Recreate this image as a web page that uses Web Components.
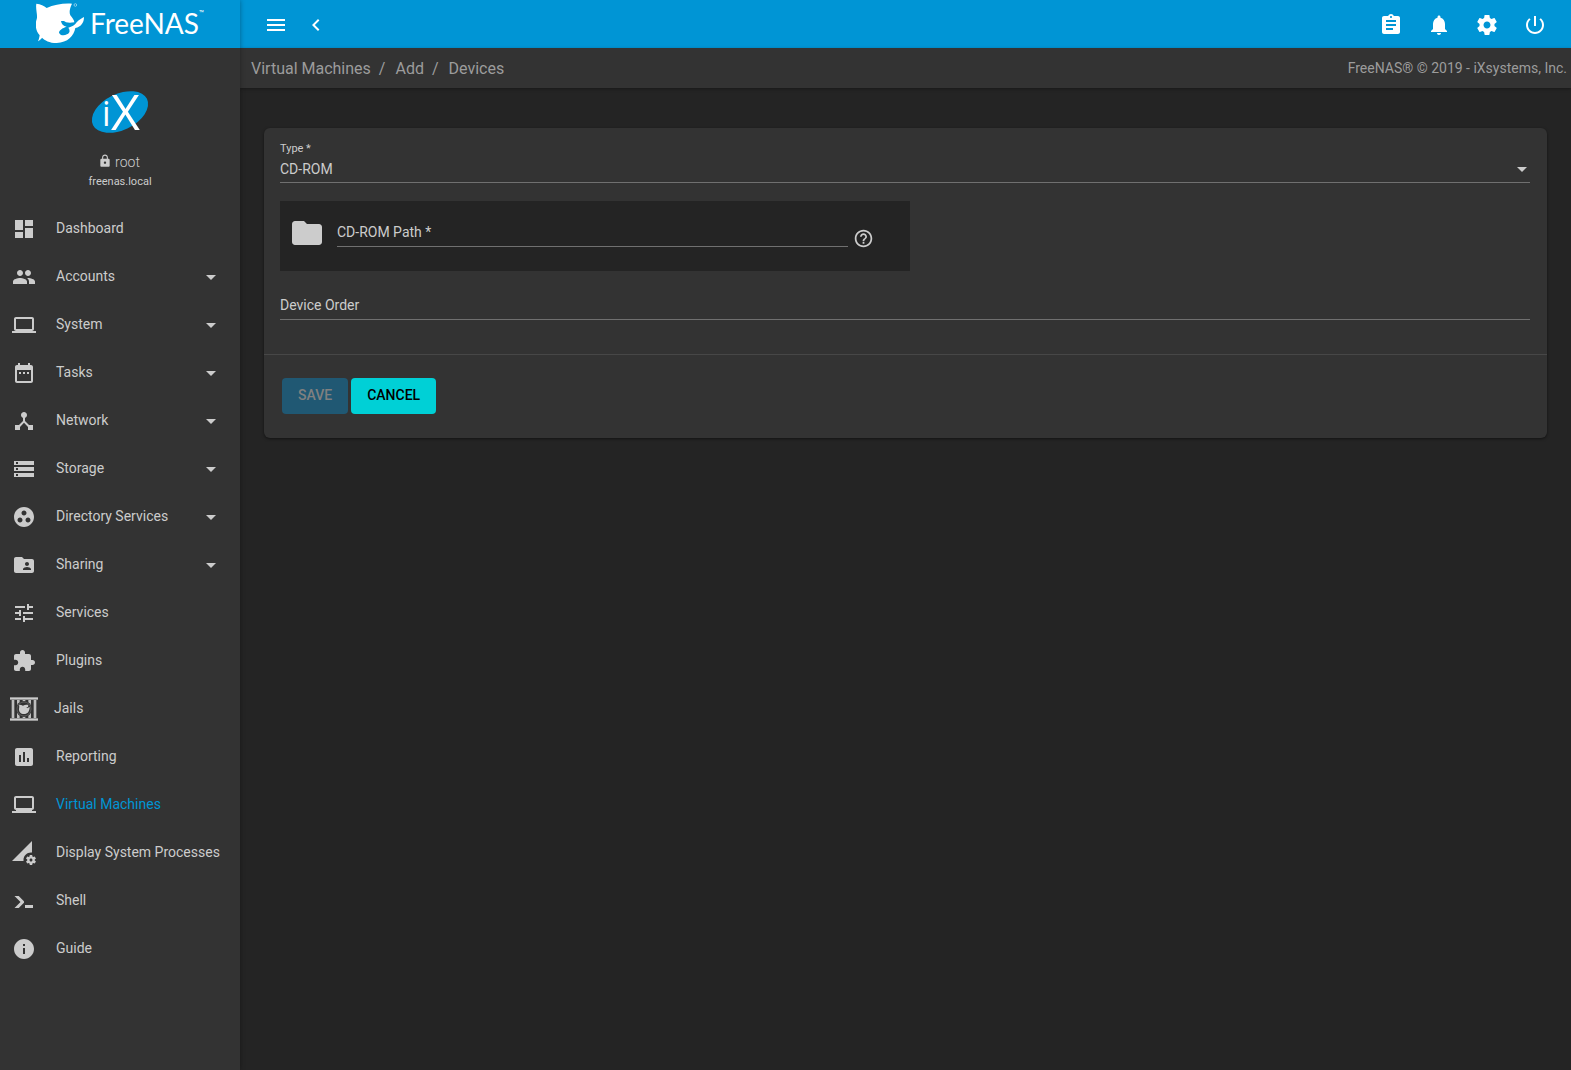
<!DOCTYPE html>
<html lang="en">
<head>
<meta charset="utf-8">
<meta name="viewport" content="width=device-width, initial-scale=1">
<title>FreeNAS - Virtual Machines</title>
<style>
  :root {
    --primary: #0095d5;
    --accent: #00d0d6;
    --bg1: #242424;
    --bg2: #333333;
    --fg1: #cccccc;
    --fg2: #9c9c9c;
    --line: #707070;
  }

  body {
    margin: 0;
    background: var(--bg1);
    color: var(--fg1);
    font-family: Roboto, "Liberation Sans", sans-serif;
    font-size: 14px;
  }
</style>
</head>
<body>
<nas-layout>
  <nas-brand slot="brand"></nas-brand>
  <nas-profile slot="sidebar" user="root" host="freenas.local"></nas-profile>
  <nas-nav slot="sidebar">
    <nas-nav-item icon="dashboard">Dashboard</nas-nav-item>
    <nas-nav-item icon="people" expandable>Accounts</nas-nav-item>
    <nas-nav-item icon="computer" expandable>System</nas-nav-item>
    <nas-nav-item icon="date_range" expandable>Tasks</nas-nav-item>
    <nas-nav-item icon="device_hub" expandable>Network</nas-nav-item>
    <nas-nav-item icon="storage" expandable>Storage</nas-nav-item>
    <nas-nav-item icon="group_work" expandable>Directory Services</nas-nav-item>
    <nas-nav-item icon="folder_shared" expandable>Sharing</nas-nav-item>
    <nas-nav-item icon="tune">Services</nas-nav-item>
    <nas-nav-item icon="extension">Plugins</nas-nav-item>
    <nas-nav-item icon="jail" wide>Jails</nas-nav-item>
    <nas-nav-item icon="assessment">Reporting</nas-nav-item>
    <nas-nav-item icon="laptop" active>Virtual Machines</nas-nav-item>
    <nas-nav-item icon="perm_data_setting">Display System Processes</nas-nav-item>
    <nas-nav-item icon="console">Shell</nas-nav-item>
    <nas-nav-item icon="info">Guide</nas-nav-item>
  </nas-nav>

  <nas-topbar slot="topbar">
    <nas-icon-button slot="start" icon="menu" label="Toggle menu"></nas-icon-button>
    <nas-icon-button slot="start" icon="chevron_left" label="Collapse menu"></nas-icon-button>
    <nas-icon-button slot="end" icon="assignment" label="Task manager"></nas-icon-button>
    <nas-icon-button slot="end" icon="notifications" label="Alerts"></nas-icon-button>
    <nas-icon-button slot="end" icon="settings" label="Settings"></nas-icon-button>
    <nas-icon-button slot="end" icon="power" label="Power"></nas-icon-button>
  </nas-topbar>

  <nas-breadcrumb slot="topbar" path="Virtual Machines,Add,Devices">FreeNAS® © 2019 - iXsystems, Inc.</nas-breadcrumb>

  <nas-card>
    <nas-select label="Type *" options="CD-ROM,NIC,Disk,Raw File,VNC"></nas-select>
    <nas-explorer label="CD-ROM Path *"></nas-explorer>
    <nas-input label="Device Order"></nas-input>
    <nas-button slot="actions" color="primary" disabled>SAVE</nas-button>
    <nas-button slot="actions" color="accent">CANCEL</nas-button>
  </nas-card>
</nas-layout>

<script>
const ICONS = {
  dashboard: "M3 13h8V3H3v10zm0 8h8v-6H3v6zm10 0h8V11h-8v10zm0-18v6h8V3h-8z",
  people: "M16 11c1.66 0 2.99-1.34 2.99-3S17.66 5 16 5c-1.66 0-3 1.34-3 3s1.34 3 3 3zm-8 0c1.66 0 2.99-1.34 2.99-3S9.66 5 8 5C6.34 5 5 6.34 5 8s1.34 3 3 3zm0 2c-2.33 0-7 1.17-7 3.5V19h14v-2.5c0-2.33-4.67-3.5-7-3.5zm8 0c-.29 0-.62.02-.97.05 1.16.84 1.97 1.97 1.97 3.45V19h6v-2.5c0-2.33-4.67-3.5-7-3.5z",
  computer: "M20 18c1.1 0 1.99-.9 1.99-2L22 6c0-1.1-.9-2-2-2H4c-1.1 0-2 .9-2 2v10c0 1.1.9 2 2 2H0v2h24v-2h-4zM4 6h16v10H4V6z",
  laptop: "M20 18v-1c1.1 0 1.99-.9 1.99-2L22 5c0-1.1-.9-2-2-2H4c-1.1 0-2 .9-2 2v10c0 1.1.9 2 2 2v1H0v2h24v-2h-4zM4 5h16v10H4V5z",
  date_range: "M9 11H7v2h2v-2zm4 0h-2v2h2v-2zm4 0h-2v2h2v-2zm2-7h-1V2h-2v2H8V2H6v2H5c-1.11 0-1.99.9-1.99 2L3 20c0 1.1.89 2 2 2h14c1.1 0 2-.9 2-2V6c0-1.1-.9-2-2-2zm0 16H5V9h14v11z",
  device_hub: "M17 16l-4-4V8.82C14.16 8.4 15 7.3 15 6c0-1.66-1.34-3-3-3S9 4.34 9 6c0 1.3.84 2.4 2 2.82V12l-4 4H3v5h5v-3.05l4-4.2 4 4.2V21h5v-5h-4z",
  storage: "M2 20h20v-4H2v4zm2-3h2v2H4v-2zM2 4v4h20V4H2zm4 3H4V5h2v2zm-4 7h20v-4H2v4zm2-3h2v2H4v-2z",
  group_work: "M12 2C6.48 2 2 6.48 2 12s4.48 10 10 10 10-4.48 10-10S17.52 2 12 2zM8 17.5c-1.38 0-2.5-1.12-2.5-2.5s1.12-2.5 2.5-2.5 2.5 1.12 2.5 2.5-1.12 2.5-2.5 2.5zM9.5 8c0-1.38 1.12-2.5 2.5-2.5s2.5 1.12 2.5 2.5-1.12 2.5-2.5 2.5S9.5 9.38 9.5 8zm6.5 9.5c-1.38 0-2.5-1.12-2.5-2.5s1.12-2.5 2.5-2.5 2.5 1.12 2.5 2.5-1.12 2.5-2.5 2.5z",
  folder_shared: "M20 6h-8l-2-2H4c-1.1 0-1.99.9-1.99 2L2 18c0 1.1.9 2 2 2h16c1.1 0 2-.9 2-2V8c0-1.1-.9-2-2-2zm-5 3c1.1 0 2 .9 2 2s-.9 2-2 2-2-.9-2-2 .9-2 2-2zm4 8h-8v-1c0-1.33 2.67-2 4-2s4 .67 4 2v1z",
  tune: "M3 17v2h6v-2H3zM3 5v2h10V5H3zm10 16v-2h8v-2h-8v-2h-2v6h2zM7 9v2H3v2h4v2h2V9H7zm14 4v-2H11v2h10zm-6-4h2V7h4V5h-4V3h-2v6z",
  extension: "M20.5 11H19V7c0-1.1-.9-2-2-2h-4V3.5C13 2.12 11.88 1 10.5 1S8 2.12 8 3.5V5H4c-1.1 0-1.99.9-1.99 2v3.8H3.5c1.49 0 2.7 1.21 2.7 2.7s-1.21 2.7-2.7 2.7H2V20c0 1.1.9 2 2 2h3.8v-1.5c0-1.49 1.21-2.7 2.7-2.7 1.49 0 2.7 1.21 2.7 2.7V22H17c1.1 0 2-.9 2-2v-4h1.5c1.38 0 2.5-1.12 2.5-2.5S21.88 11 20.5 11z",
  assessment: "M19 3H5c-1.1 0-2 .9-2 2v14c0 1.1.9 2 2 2h14c1.1 0 2-.9 2-2V5c0-1.1-.9-2-2-2zM9 17H7v-7h2v7zm4 0h-2V7h2v10zm4 0h-2v-4h2v4z",
  perm_data_setting: "M18.99 11.5c.34 0 .67.03 1 .07L20 0 0 20h11.56c-.04-.33-.07-.66-.07-1 0-4.14 3.36-7.5 7.5-7.5zm3.71 7.99c.02-.16.04-.32.04-.49 0-.17-.01-.33-.04-.49l1.06-.83c.09-.08.12-.21.06-.32l-1-1.73c-.06-.11-.19-.15-.31-.11l-1.24.5c-.26-.2-.54-.37-.85-.49l-.19-1.32c-.01-.12-.12-.21-.24-.21h-2c-.12 0-.23.09-.25.21l-.19 1.32c-.3.13-.59.29-.85.49l-1.24-.5c-.11-.04-.24 0-.31.11l-1 1.73c-.06.11-.04.24.06.32l1.06.83c-.02.16-.03.32-.03.49 0 .17.01.33.03.49l-1.06.83c-.09.08-.12.21-.06.32l1 1.73c.06.11.19.15.31.11l1.24-.5c.26.2.54.37.85.49l.19 1.32c.02.12.12.21.25.21h2c.12 0 .23-.09.25-.21l.19-1.32c.3-.13.59-.29.84-.49l1.25.5c.11.04.24 0 .31-.11l1-1.73c.06-.11.03-.24-.06-.32l-1.07-.83zm-3.71 1.01c-.83 0-1.5-.67-1.5-1.5s.67-1.5 1.5-1.5 1.5.67 1.5 1.5-.67 1.5-1.5 1.5z",
  console: "M13 19v-3h8v3h-8zM8.5 13L2.47 7h4.24l4.96 4.95c.58.59.58 1.55.03 2.12L6.74 19H2.5l6-6z",
  info: "M12 2C6.48 2 2 6.48 2 12s4.48 10 10 10 10-4.48 10-10S17.52 2 12 2zm1 15h-2v-6h2v6zm0-8h-2V7h2v2z",
  menu: "M3 18h18v-2H3v2zm0-5h18v-2H3v2zm0-7v2h18V6H3z",
  chevron_left: "M15.41 7.41L14 6l-6 6 6 6 1.41-1.41L10.83 12z",
  assignment: "M19 3h-4.18C14.4 1.84 13.3 1 12 1c-1.3 0-2.4.84-2.82 2H5c-1.1 0-2 .9-2 2v14c0 1.1.9 2 2 2h14c1.1 0 2-.9 2-2V5c0-1.1-.9-2-2-2zm-7 0c.55 0 1 .45 1 1s-.45 1-1 1-1-.45-1-1 .45-1 1-1zm2 14H7v-2h7v2zm3-4H7v-2h10v2zm0-4H7V7h10v2z",
  notifications: "M12 22c1.1 0 2-.9 2-2h-4c0 1.1.89 2 2 2zm6-6v-5c0-3.07-1.64-5.64-4.5-6.32V4c0-.83-.67-1.5-1.5-1.5s-1.5.67-1.5 1.5v.68C7.63 5.36 6 7.92 6 11v5l-2 2v1h16v-1l-2-2z",
  settings: "M19.43 12.98c.04-.32.07-.64.07-.98s-.03-.66-.07-.98l2.11-1.65c.19-.15.24-.42.12-.64l-2-3.46c-.12-.22-.39-.3-.61-.22l-2.49 1c-.52-.4-1.08-.73-1.69-.98l-.38-2.65C14.46 2.18 14.25 2 14 2h-4c-.25 0-.46.18-.49.42l-.38 2.65c-.61.25-1.17.59-1.69.98l-2.49-1c-.23-.09-.49 0-.61.22l-2 3.46c-.13.22-.07.49.12.64l2.11 1.65c-.04.32-.07.65-.07.98s.03.66.07.98l-2.11 1.65c-.19.15-.24.42-.12.64l2 3.46c.12.22.39.3.61.22l2.49-1c.52.4 1.08.73 1.69.98l.38 2.65c.03.24.24.42.49.42h4c.25 0 .46-.18.49-.42l.38-2.65c.61-.25 1.17-.59 1.69-.98l2.49 1c.23.09.49 0 .61-.22l2-3.46c.12-.22.07-.49-.12-.64l-2.11-1.65zM12 15.5c-1.93 0-3.5-1.57-3.5-3.5s1.57-3.5 3.5-3.5 3.5 1.57 3.5 3.5-1.57 3.5-3.5 3.5z",
  power: "M13 3h-2v10h2V3zm4.83 2.17l-1.42 1.42C17.99 7.86 19 9.81 19 12c0 3.87-3.13 7-7 7s-7-3.13-7-7c0-2.19 1.01-4.14 2.58-5.42L6.17 5.17C4.23 6.82 3 9.26 3 12c0 4.97 4.03 9 9 9s9-4.03 9-9c0-2.74-1.23-5.18-3.17-6.83z",
  lock: "M18 8h-1V6c0-2.76-2.24-5-5-5S7 3.24 7 6v2H6c-1.1 0-2 .9-2 2v10c0 1.1.9 2 2 2h12c1.1 0 2-.9 2-2V10c0-1.1-.9-2-2-2zm-6 9c-1.1 0-2-.9-2-2s.9-2 2-2 2 .9 2 2-.9 2-2 2zm3.1-9H8.9V6c0-1.71 1.39-3.1 3.1-3.1 1.71 0 3.1 1.39 3.1 3.1v2z",
  folder: "M10 4H4c-1.1 0-1.99.9-1.99 2L2 18c0 1.1.9 2 2 2h16c1.1 0 2-.9 2-2V8c0-1.1-.9-2-2-2h-8l-2-2z",
  help: "M11 18h2v-2h-2v2zm1-16C6.48 2 2 6.48 2 12s4.48 10 10 10 10-4.48 10-10S17.52 2 12 2zm0 18c-4.41 0-8-3.59-8-8s3.59-8 8-8 8 3.59 8 8-3.59 8-8 8zm0-14c-2.21 0-4 1.79-4 4h2c0-1.1.9-2 2-2s2 .9 2 2c0 2-3 1.75-3 5h2c0-2.25 3-2.5 3-5 0-2.21-1.79-4-4-4z",
  arrow_drop_down: "M7 10l5 5 5-5z"
};

// Bars with the round FreeNAS mark behind them
const JAIL = `
  <svg viewBox="0 0 84 72" width="28" height="24" aria-hidden="true">
    <g fill="currentColor">
      <path d="M0 0h84v9H0zM0 63h84v9H0z" opacity=".65"/>
      <path d="M0 3h84v3H0zM0 66h84v3H0z"/>
      <path d="M5 9h8v54H5zM21 9h8v54h-8zM38 9h8v54h-8zM55 9h8v54h-8zM71 9h8v54h-8z" opacity=".9"/>
    </g>
    <circle cx="42" cy="36" r="24" fill="#333"/>
    <circle cx="42" cy="36" r="21" fill="none" stroke="currentColor" stroke-width="2" opacity=".4"/>
    <path fill="currentColor" d="M27 23c5 0 9 1 12 3 5-3 11-3 16-2-1 4-1 6 0 8 2-1 3-2 4-3 0 14-6 22-17 22-10 0-16-7-15-16 1-5 1-7 0-12z"/>
    <path d="M49 30l6 1-3 3z" fill="#333"/>
  </svg>`;

class Icon extends HTMLElement {
  constructor() {
    super();
    this.attachShadow({ mode: "open" });
  }

  connectedCallback() {
    const name = this.getAttribute("name");
    const svg = name === "jail"
      ? JAIL
      : `<svg viewBox="0 0 24 24" class="glyph" aria-hidden="true"><path fill="currentColor" d="${ICONS[name]}"/></svg>`;

    this.shadowRoot.innerHTML = `
      <style>
        :host { display: block; flex: none; }
        svg { display: block; }
        .glyph { width: var(--icon-size, 24px); height: var(--icon-size, 24px); }
      </style>
      ${svg}
    `;
  }
}

class Layout extends HTMLElement {
  constructor() {
    super();
    this.attachShadow({ mode: "open" }).innerHTML = `
      <style>
        :host {
          display: grid;
          grid-template-columns: 240px minmax(0, 1fr);
          min-height: 100vh;
        }

        aside {
          position: relative;
          z-index: 1;
          background: var(--bg2);
          box-shadow: 0 0 5px rgba(0, 0, 0, 0.35);
        }

        main { padding: 40px 24px; }
      </style>
      <aside>
        <slot name="brand"></slot>
        <slot name="sidebar"></slot>
      </aside>
      <div>
        <slot name="topbar"></slot>
        <main><slot></slot></main>
      </div>
    `;
  }
}

class Brand extends HTMLElement {
  constructor() {
    super();
    this.attachShadow({ mode: "open" }).innerHTML = `
      <style>
        :host { display: block; background: var(--primary); }

        a {
          display: flex;
          align-items: center;
          gap: 5px;
          height: 48px;
          padding-left: 36px;
          box-sizing: border-box;
          color: #fff;
          text-decoration: none;
        }

        svg { display: block; padding-bottom: 2px; }
        .word { font: 400 28px/46px Lato, sans-serif; padding-bottom: 2px; }
        .tm { align-self: flex-start; margin: 10px 0 0 -5px; font-size: 8px; line-height: 8px; }
      </style>
      <a href="#">
        <svg viewBox="108 9 147 123" width="49" height="41" aria-hidden="true">
          <path fill="#fff" d="M109 11C122 12 132 17 140 24C162 14 190 9 216 11C209 25 207 38 211 46C218 54 222 60 223 67C213 69 206 69 198 67C194 63 190 62 183 63C184 72 190 79 200 80C187 84 177 91 177 98C180 106 191 108 201 103C211 98 210 90 205 83C216 80 224 76 230 67C237 59 245 55 252 51C252 68 244 80 226 84C222 107 203 128 170 129C148 129 134 121 126 113C123 118 118 121 114 124C117 118 118 112 119 106C106 92 105 72 110 58C114 45 106 28 109 11Z"/>
          <circle cx="226" cy="15" r="4" fill="none" stroke="#fff" stroke-width="2" opacity=".7"/>
        </svg>
        <span class="word">FreeNAS</span>
        <span class="tm">™</span>
      </a>
    `;
  }
}

class Profile extends HTMLElement {
  constructor() {
    super();
    this.attachShadow({ mode: "open" });
  }

  connectedCallback() {
    this.shadowRoot.innerHTML = `
      <style>
        :host {
          display: flex;
          flex-direction: column;
          align-items: center;
          padding: 42px 0 16px;
        }

        svg { display: block; overflow: visible; }
        text { font-family: "Open Sans", sans-serif; fill: #fff; }

        .user {
          display: flex;
          gap: 3px;
          align-items: center;
          margin-top: 19px;
          padding-right: 2px;
          font-weight: 300;
          line-height: 18px;
          --icon-size: 14px;
        }

        nas-icon { padding-bottom: 3px; }
        .host { margin-top: 4px; font-size: 11px; line-height: 14px; }
      </style>
      <svg viewBox="0 0 58 44" width="58" height="44" role="img" aria-label="iX">
        <ellipse cx="29" cy="22" rx="30" ry="18" transform="rotate(-26 29 22)" fill="#0095d5"/>
        <text x="11" y="36" font-size="34">i</text>
        <text x="20" y="40" font-size="50">X</text>
      </svg>
      <div class="user"><nas-icon name="lock"></nas-icon>${this.getAttribute("user")}</div>
      <div class="host">${this.getAttribute("host")}</div>
    `;
  }
}

class Nav extends HTMLElement {
  constructor() {
    super();
    this.attachShadow({ mode: "open" }).innerHTML = `
      <style>:host { display: block; }</style>
      <nav><slot></slot></nav>
    `;
  }
}

class NavItem extends HTMLElement {
  constructor() {
    super();
    this.attachShadow({ mode: "open" });
  }

  connectedCallback() {
    this.shadowRoot.innerHTML = `
      <style>
        :host { display: block; }

        a {
          display: flex;
          align-items: center;
          gap: 20px;
          height: 48px;
          padding: 0 17px 0 12px;
          color: inherit;
          text-decoration: none;
        }

        /* the jail icon is 28px wide, so it eats into the padding */
        :host([wide]) a { gap: 16px; padding-left: 10px; }

        span { flex: 1; padding-bottom: 2px; white-space: nowrap; }
        :host([active]) span { color: var(--primary); }
      </style>
      <a href="#">
        <nas-icon name="${this.getAttribute("icon")}"></nas-icon>
        <span><slot></slot></span>
        ${this.hasAttribute("expandable") ? `<nas-icon name="arrow_drop_down"></nas-icon>` : ""}
      </a>
    `;
  }
}

class Topbar extends HTMLElement {
  constructor() {
    super();
    this.attachShadow({ mode: "open" }).innerHTML = `
      <style>
        :host {
          display: flex;
          justify-content: space-between;
          height: 48px;
          padding: 2px 12px 0 16px;
          box-sizing: border-box;
          background: var(--primary);
          color: #fff;
        }

        div { display: flex; }
        .start { --button-width: 40px; }
      </style>
      <div class="start"><slot name="start"></slot></div>
      <div><slot name="end"></slot></div>
    `;
  }
}

class IconButton extends HTMLElement {
  constructor() {
    super();
    this.attachShadow({ mode: "open" });
  }

  connectedCallback() {
    this.shadowRoot.innerHTML = `
      <style>
        :host { display: block; }

        button {
          display: flex;
          align-items: center;
          justify-content: center;
          width: var(--button-width, 48px);
          height: 100%;
          padding: 0;
          border: 0;
          background: none;
          color: inherit;
          cursor: pointer;
        }
      </style>
      <button type="button" aria-label="${this.getAttribute("label")}">
        <nas-icon name="${this.getAttribute("icon")}"></nas-icon>
      </button>
    `;
  }
}

class Breadcrumb extends HTMLElement {
  constructor() {
    super();
    this.attachShadow({ mode: "open" });
  }

  connectedCallback() {
    const parts = this.getAttribute("path").split(",");

    this.shadowRoot.innerHTML = `
      <style>
        :host {
          display: flex;
          align-items: center;
          justify-content: space-between;
          height: 40px;
          padding: 0 4px 0 11px;
          background: var(--bg2);
          color: var(--fg2);
          box-shadow: 0 1px 3px rgba(0, 0, 0, 0.35);
        }

        ul {
          display: flex;
          margin: 0;
          padding: 2px 0 0;
          list-style: none;
          font-size: 16px;
          line-height: 20px;
        }

        li + li::before { content: "/"; padding: 0 10px 0 8px; }
        a { color: inherit; text-decoration: none; }
      </style>
      <ul>${parts.map((part) => `<li><a href="#">${part}</a></li>`).join("")}</ul>
      <span><slot></slot></span>
    `;
  }
}

class Card extends HTMLElement {
  constructor() {
    super();
    this.attachShadow({ mode: "open" }).innerHTML = `
      <style>
        :host {
          display: block;
          border-radius: 6px;
          background: var(--bg2);
          box-shadow: 0 1px 3px rgba(0, 0, 0, 0.5);
        }

        .fields { padding: 15px 17px 34px 16px; }

        .actions {
          display: flex;
          gap: 3px;
          padding: 23px 18px 24px;
          border-top: 1px solid #474747;
        }
      </style>
      <div class="fields"><slot></slot></div>
      <div class="actions"><slot name="actions"></slot></div>
    `;
  }
}

class Select extends HTMLElement {
  constructor() {
    super();
    this.attachShadow({ mode: "open" });
  }

  connectedCallback() {
    const options = this.getAttribute("options").split(",");

    this.shadowRoot.innerHTML = `
      <style>
        :host { display: block; }
        label { display: block; font-size: 11px; line-height: 12px; }
        .control { display: grid; align-items: center; }
        .control > * { grid-area: 1 / 1; }

        select {
          appearance: none;
          width: 100%;
          height: 28px;
          padding: 0;
          border: 0;
          border-bottom: 1px solid var(--line);
          border-radius: 0;
          background: none;
          color: inherit;
          font: inherit;
        }

        option { background: var(--bg2); }
        svg { justify-self: end; margin-right: 3px; pointer-events: none; }
      </style>
      <label for="field">${this.getAttribute("label")}</label>
      <div class="control">
        <select id="field">${options.map((option) => `<option>${option}</option>`).join("")}</select>
        <svg viewBox="0 0 10 5" width="10" height="5" aria-hidden="true"><path fill="currentColor" d="M0 0l5 5 5-5z"/></svg>
      </div>
    `;
  }
}

class Input extends HTMLElement {
  constructor() {
    super();
    this.attachShadow({ mode: "open" });
  }

  connectedCallback() {
    this.shadowRoot.innerHTML = `
      <style>
        :host { display: grid; align-items: center; margin-top: 21px; }
        label, input { grid-area: 1 / 1; }
        label { line-height: 16px; padding-bottom: 2px; pointer-events: none; }

        input {
          width: 100%;
          height: 28px;
          padding: 0;
          box-sizing: border-box;
          border: 0;
          border-bottom: 1px solid var(--line);
          outline: 0;
          background: none;
          color: inherit;
          font: inherit;
        }

        /* the label steps aside once there is a value */
        input:not(:placeholder-shown) + label { visibility: hidden; }
      </style>
      <input id="field" type="text" placeholder=" ">
      <label for="field">${this.getAttribute("label")}</label>
    `;
  }
}

class Explorer extends HTMLElement {
  constructor() {
    super();
    this.attachShadow({ mode: "open" });
  }

  connectedCallback() {
    this.shadowRoot.innerHTML = `
      <style>
        :host {
          display: flex;
          align-items: center;
          width: calc(50% + 5px);
          margin-top: 18px;
          padding: 14px 36px 20px 9px;
          box-sizing: border-box;
          background: var(--bg1);
        }

        button {
          padding: 0;
          border: 0;
          background: none;
          color: inherit;
          cursor: pointer;
        }

        .browse { --icon-size: 36px; }
        nas-input { flex: 1; margin: 0 5px 0 12px; }
        .help { --icon-size: 21px; margin-top: 11px; }
      </style>
      <button class="browse" type="button" aria-label="Browse"><nas-icon name="folder"></nas-icon></button>
      <nas-input label="${this.getAttribute("label")}"></nas-input>
      <button class="help" type="button" aria-label="Help"><nas-icon name="help"></nas-icon></button>
    `;
  }
}

class Button extends HTMLElement {
  constructor() {
    super();
    this.attachShadow({ mode: "open" });
  }

  connectedCallback() {
    this.shadowRoot.innerHTML = `
      <style>
        :host { display: block; }

        button {
          height: 36px;
          padding: 0 16px 2px;
          border: 0;
          border-radius: 4px;
          background: var(--accent);
          color: #000;
          font: inherit;
          font-weight: 500;
          cursor: pointer;
        }

        :host([color="primary"]) button { background: var(--primary); color: #fff; }
        button:disabled, :host([color="primary"]) button:disabled { background: #205873; color: #808080; cursor: default; }
      </style>
      <button type="button" ${this.hasAttribute("disabled") ? "disabled" : ""}><slot></slot></button>
    `;
  }
}

customElements.define("nas-icon", Icon);
customElements.define("nas-layout", Layout);
customElements.define("nas-brand", Brand);
customElements.define("nas-profile", Profile);
customElements.define("nas-nav", Nav);
customElements.define("nas-nav-item", NavItem);
customElements.define("nas-topbar", Topbar);
customElements.define("nas-icon-button", IconButton);
customElements.define("nas-breadcrumb", Breadcrumb);
customElements.define("nas-card", Card);
customElements.define("nas-select", Select);
customElements.define("nas-input", Input);
customElements.define("nas-explorer", Explorer);
customElements.define("nas-button", Button);
</script>
</body>
</html>
